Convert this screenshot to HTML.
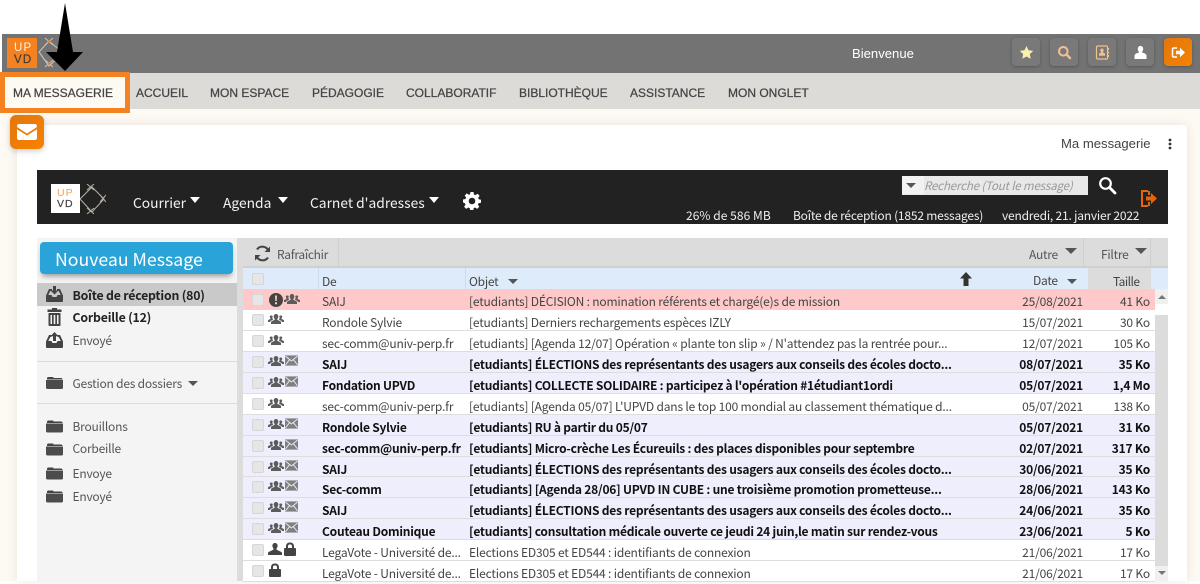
<!DOCTYPE html>
<html lang="fr"><head><meta charset="utf-8"><title>Ma messagerie</title>
<style>
*{box-sizing:border-box}
html,body{margin:0;padding:0}
body{width:1200px;height:581px;overflow:hidden;position:relative;background:#fff;font-family:"Noto Sans CJK JP","Liberation Sans",sans-serif;font-size:12px;letter-spacing:-.25px;color:#333}
.a{position:absolute;white-space:nowrap}
.nav{position:absolute;top:85px;font:12px/16px "Liberation Sans",sans-serif;color:#444;letter-spacing:0;-webkit-text-stroke:.25px #444;white-space:nowrap}
.tb{position:absolute;top:38px;width:28px;height:28px;border-radius:4px;background:#797979;box-shadow:0 1px 3px rgba(0,0,0,.25)}
.tb svg{position:absolute;left:7px;top:7px}
#rows{position:absolute;left:243px;top:289px;width:912px}
.r{position:relative;height:20.95px;border-bottom:1px solid #ddd;background:#fff;color:#444;line-height:20px;font-size:12px;letter-spacing:-.18px}
.r.u{background:#eeeefc;color:#111;font-weight:700;letter-spacing:-.22px}
.r.p{background:#ffc9c9;border-bottom:0}
.r span,.r svg,.r i{position:absolute;white-space:nowrap}
.r i{left:9px;top:4px;width:12px;height:12px;border-radius:2px;background:#e6e6e6;border:1px solid #d6d6d6}
.r.p i{top:5px}
.r .g{left:25px;top:3px}.r .e{left:42px;top:3px}
.f{left:79px;top:3px}.s{left:226px;top:3px}.d{right:72px;top:3px}.z{right:5px;top:3px}
.side{position:absolute;white-space:nowrap;line-height:16px;color:#555;font-size:12px;letter-spacing:-.22px}
.sb{font-size:12.3px;letter-spacing:-.2px;font-weight:700;color:#222}
.st{position:absolute;white-space:nowrap;top:208px;color:#eee;font-size:12px;line-height:16px;letter-spacing:-.2px}
.mn{position:absolute;white-space:nowrap;top:192px;color:#f2f2f2;font-size:13.8px;line-height:20px;letter-spacing:0}
.car{position:absolute;top:197px;width:0;height:0;border:5.5px solid transparent;border-top:6px solid #fff;border-bottom:0}
.h{position:absolute;white-space:nowrap;top:273px;line-height:17px;color:#444}
.t{position:absolute;white-space:nowrap;top:247px;line-height:16px;color:#555}
</style></head><body>
<svg width="0" height="0" style="position:absolute"><defs>
<symbol id="grp" viewBox="0 0 16 12"><path fill="#5c5c5c" d="M8 1c1.500 0 2.300 1.200 2.300 2.600 0 1-.5 1.900-1 2.400v.8l3 1.500c.5.3.7.6.7 1V11H3V9.300c0-.4.2-.7.7-1l3-1.500V6c-.5-.5-1-1.400-1-2.400C5.700 2.200 6.500 1 8 1zM3.300 2.500c.6 0 1.100.2 1.500.6-.3.5-.4 1-.4 1.500 0 .8.300 1.500.7 2.100L2.200 8.100V9H0V7.600c0-.3.100-.5.500-.7l2-1v-.6c-.4-.4-.7-1-.7-1.600 0-1 .6-1.200 1.500-1.200zm9.400 0c.9 0 1.500.2 1.500 1.200 0 .6-.3 1.200-.7 1.600v.6l2 1c.4.2.5.4.5.7V9h-2.200v-.9l-2.900-1.400c.4-.6.7-1.300.7-2.100 0-.5-.1-1-.4-1.500.4-.4.900-.6 1.500-.6z"/></symbol>
<symbol id="env" viewBox="0 0 14 11"><path fill="#808080" d="M0 0h14v11H0z"/><path fill="none" stroke="#eeeefc" stroke-width="1" d="M.5.800 7 6l6.500-5.200M.5 10.200 5 4.500M13.500 10.200 9 4.500"/></symbol>
<symbol id="lock" viewBox="0 0 12 14"><path fill="#444" d="M2 6V4.200C2 1.800 3.700.5 6 .5s4 1.300 4 3.700V6h1c.6 0 1 .4 1 1v6c0 .6-.4 1-1 1H1c-.6 0-1-.4-1-1V7c0-.6.4-1 1-1zm2 0h4V4.200C8 3 7.200 2.400 6 2.400S4 3 4 4.200z"/></symbol>
<symbol id="usr" viewBox="0 0 14 12"><path fill="#444" d="M7 0c1.700 0 2.600 1.300 2.600 2.900 0 1.100-.5 2.100-1.100 2.700v1l4.400 2.100c.7.300 1.100.8 1.100 1.400V12H0v-1.900c0-.6.400-1.100 1.100-1.400l4.400-2.100v-1C4.900 5 4.400 4 4.400 2.900 4.400 1.300 5.300 0 7 0z"/></symbol>
<symbol id="fold" viewBox="0 0 17 13"><path fill="#444" d="M1 2.500C1 1.500 1.500 1 2.500 1h3.800c.7 0 1 .3 1.400 1h7.300c1 0 1.500.5 1.500 1.500H1z"/><path fill="#4c4c4c" d="M0 4h17v7.500c0 1-.5 1.500-1.500 1.500h-14C.5 13 0 12.500 0 11.500z"/></symbol>
<symbol id="inb" viewBox="0 0 17 16"><path fill="#444" d="M3 3h3v2H4.300L2.300 9h3.200l1 2h4l1-2h3.200l-2-4H11V3h3l3 6.500V15c0 .6-.4 1-1 1H1c-.6 0-1-.4-1-1V9.500z"/><path fill="#444" d="M7 0h3v4.500h2.500l-4 4-4-4H7z"/></symbol>
<symbol id="snt" viewBox="0 0 17 16"><path fill="#444" d="M3 3h2.500v2H4.300L2.300 9h3.200l1 2h4l1-2h3.200l-2-4H11.500V3H14l3 6.500V15c0 .6-.4 1-1 1H1c-.6 0-1-.4-1-1V9.500z"/><path fill="#444" d="M8.500 0l4 4.200H10V9H7V4.200H4.500z"/></symbol>
</defs></svg>

<!-- top bar -->
<div class="a" style="left:2px;top:34px;width:1198px;height:39px;background:#737373"></div>
<div class="a" style="left:0;top:73px;width:1200px;height:36px;background:#dcdbd8"></div>
<div class="a" style="left:0;top:109px;width:1200px;height:472px;background:#fdf9f3"></div>

<div class="a" style="left:7px;top:38px;width:30px;height:30px;background:#f58220;color:#fdf1e3;font:11.5px/11px 'Liberation Sans',sans-serif;letter-spacing:1.2px;padding:5px 0 0 7px">UP<br><span style="color:#3d3d3d;-webkit-text-stroke:.2px #3d3d3d;position:relative;top:1px">VD</span></div>
<svg class="a" style="left:37px;top:37px" width="34" height="32" viewBox="0 0 34 32"><g fill="none" stroke="#c9c2b8" stroke-width="1.100"><path d="M2 15 12 4l14 12-14 13z"/><path d="M8 1l8 7M16 1 8 8M8 23l8 7M16 23l-8 7"/><path d="M22 11l8 8M30 11l-8 8"/></g><circle cx="12" cy="4.500" r="1.300" fill="#f58220"/><circle cx="12" cy="26.500" r="1.300" fill="#f58220"/></svg>

<div class="a" style="left:852px;top:45px;color:#fff;font:13.1px/17px 'Liberation Sans',sans-serif;letter-spacing:0">Bienvenue</div>

<div class="tb" style="left:1012px"><svg width="15" height="15" viewBox="0 0 15 15"><path fill="#fbefae" d="M7.500 1l2 4.300 4.700.6-3.400 3.200.9 4.700-4.200-2.300-4.200 2.300.9-4.700L.8 5.900l4.700-.6z"/></svg></div>
<div class="tb" style="left:1050px"><svg width="15" height="15" viewBox="0 0 15 15"><circle cx="6.300" cy="6.300" r="4.300" fill="none" stroke="#f2c08e" stroke-width="2"/><path d="M9.500 9.500l3.500 3.500" stroke="#f2c08e" stroke-width="2.400" stroke-linecap="round"/></svg></div>
<div class="tb" style="left:1088px"><svg width="15" height="15" viewBox="0 0 15 15"><rect x="1.500" y="1" width="11" height="13" rx="1" fill="none" stroke="#f2c08e" stroke-width="1.200"/><path fill="#f2c08e" d="M7 3.500c1.200 0 1.700.8 1.700 1.800 0 .6-.3 1.200-.7 1.500v.7l2 1v2.200H4V8.500l2-1v-.7c-.4-.3-.7-.9-.7-1.500C5.300 4.300 5.800 3.500 7 3.500zM13 3h1v2h-1zM13 6.500h1v2h-1zM13 10h1v2h-1z"/></svg></div>
<div class="tb" style="left:1126px"><svg width="15" height="15" viewBox="0 0 15 15"><path fill="#fff" d="M7.500 1C9.300 1 10.200 2.300 10.200 4c0 1.200-.5 2.200-1.100 2.800l-.1.700c2.500.7 4.500 1.600 4.500 3.300V14H1.500v-3.200c0-1.700 2-2.600 4.500-3.300l-.1-.7C5.300 6.200 4.800 5.200 4.800 4 4.800 2.300 5.700 1 7.500 1z"/></svg></div>
<div class="tb" style="left:1164px;background:linear-gradient(135deg,#e2770f,#f78200)"><svg width="15" height="15" viewBox="0 0 15 15"><path fill="none" stroke="#fff" stroke-width="1.500" d="M6 3H2.800C2 3 1.500 3.500 1.500 4.300v6.400c0 .8.500 1.300 1.300 1.300H6"/><path fill="#fff" d="M5 5.700h4V2.800l5 4.700-5 4.700V9.300H5z"/></svg></div>

<!-- nav -->
<div class="a" style="left:0;top:72px;width:130px;height:41px;background:#fdf9f3;border:5px solid #f58220"></div>
<div class="nav" style="left:13px">MA MESSAGERIE</div>
<div class="nav" style="left:136px">ACCUEIL</div>
<div class="nav" style="left:210px">MON ESPACE</div>
<div class="nav" style="left:312px">PÉDAGOGIE</div>
<div class="nav" style="left:406px">COLLABORATIF</div>
<div class="nav" style="left:519px">BIBLIOTHÈQUE</div>
<div class="nav" style="left:630px">ASSISTANCE</div>
<div class="nav" style="left:728px">MON ONGLET</div>

<!-- card -->
<div class="a" style="left:17px;top:125px;width:1170px;height:456px;background:#fff;border-radius:4px 4px 0 0;box-shadow:0 0 10px rgba(120,100,70,.14)"></div>

<!-- mail button -->
<div class="a" style="left:10px;top:115px;width:34px;height:34px;border-radius:6px;background:linear-gradient(135deg,#e2770f,#f78200);box-shadow:0 2px 6px rgba(0,0,0,.2)"><svg style="position:absolute;left:7px;top:9px" width="20" height="16" viewBox="0 0 20 16"><path fill="#fff" d="M2 0h16c1.100 0 2 .9 2 2 0 .7-.4 1.200-.9 1.600L10 9.500.9 3.600C.4 3.200 0 2.700 0 2c0-1.100.9-2 2-2zM0 5.200l10 6.300 10-6.300V14c0 1.100-.9 2-2 2H2c-1.100 0-2-.9-2-2z"/></svg></div>

<div class="a" style="left:1061px;top:135px;font:13.1px/17px 'Liberation Sans',sans-serif;letter-spacing:0;color:#444">Ma messagerie</div>
<svg class="a" style="left:1168px;top:138px" width="4" height="12"><circle cx="2" cy="2" r="1.400" fill="#333"/><circle cx="2" cy="6" r="1.400" fill="#333"/><circle cx="2" cy="10" r="1.400" fill="#333"/></svg>

<!-- dark header -->
<div class="a" style="left:37px;top:170px;width:1131px;height:54px;background:#222"></div>
<div class="a" style="left:51px;top:184px;width:29px;height:29px;background:#fff;color:#f5a04f;font:10.5px/11px 'Liberation Sans',sans-serif;letter-spacing:1px;padding:4px 0 0 6px">UP<br><span style="color:#444;-webkit-text-stroke:.2px #444">VD</span></div>
<svg class="a" style="left:80px;top:184px" width="26" height="30" viewBox="0 0 26 30"><g fill="none" stroke="#b8b0a6" stroke-width="1"><path d="M0 15 12 3l12 12-12 13z"/><path d="M7 0l7 6M14 0 7 6M7 24l7 6M14 24l-7 6M20 11l6 7M26 11l-6 7"/></g></svg>
<div class="mn" style="left:133px">Courrier</div>
<div class="car" style="left:190px"></div>
<div class="mn" style="left:223px">Agenda</div>
<div class="car" style="left:278px"></div>
<div class="mn" style="left:310px">Carnet d'adresses</div>
<div class="car" style="left:429px"></div>
<svg class="a" style="left:463px;top:192px" width="18" height="18" viewBox="0 0 18 18"><path fill="#fff" fill-rule="evenodd" d="M7.500 0h3l.5 2.500 1.400.6 2.100-1.400 2.100 2.100-1.400 2.100.6 1.400 2.200.5v3l-2.500.5-.6 1.400 1.400 2.100-2.100 2.100-2.100-1.400-1.400.6-.5 2.500h-3l-.5-2.500-1.400-.6-2.100 1.400-2.100-2.100 1.400-2.100-.6-1.400L0 10.500v-3l2.500-.5.6-1.400L1.700 3.500l2.100-2.100 2.100 1.400 1.100-.6zM9 5.700a3.300 3.300 0 1 0 0 6.600 3.300 3.300 0 0 0 0-6.600z"/></svg>

<div class="a" style="left:902px;top:176px;width:186px;height:19px;background:#e8e8e8"></div>
<div class="a" style="left:902px;top:176px;width:22px;height:18px;background:#f2f2f2"></div>
<div class="a" style="left:906px;top:183px;width:0;height:0;border:5px solid transparent;border-top:5px solid #555;border-bottom:0"></div>
<div class="a" style="left:924px;top:178px;color:#9a9a9a;font:italic 11.6px/16px 'Noto Sans CJK JP',sans-serif;letter-spacing:-.2px">Recherche (Tout le message)</div>
<svg class="a" style="left:1098px;top:176px" width="20" height="20" viewBox="0 0 20 20"><circle cx="7.500" cy="7.500" r="5.300" fill="none" stroke="#fff" stroke-width="2.200"/><path d="M11.500 11.500l5.500 5.500" stroke="#fff" stroke-width="2.800" stroke-linecap="round"/></svg>
<svg class="a" style="left:1140px;top:189px" width="18" height="20" viewBox="0 0 18 20"><path fill="none" stroke="#e8640b" stroke-width="2" d="M8 2H2v15h6"/><path fill="#e8640b" d="M8 2h2v4H8zM8 13h2v4H8zM6 7.500h5V4l6 5.500-6 5.500v-3.500H6z"/></svg>
<div class="st" style="left:686px;letter-spacing:.05px">26% de 586 MB</div>
<div class="st" style="left:793px">Boîte de réception (1852 messages)</div>
<div class="st" style="left:1002px">vendredi, 21. janvier 2022</div>

<!-- sidebar -->
<div class="a" style="left:37px;top:238px;width:200px;height:343px;background:#f4f4f4"></div>
<div class="a" style="left:237px;top:238px;width:6px;height:343px;background:#dcdcdc"></div>
<div class="a" style="left:40px;top:242px;width:193px;height:32px;border-radius:4px;background:#2aa4d8;color:#fff;font-size:17.7px;letter-spacing:0;line-height:34px;padding-left:15px;box-shadow:0 4px 6px -2px rgba(0,0,0,.4)">Nouveau Message</div>
<div class="a" style="left:37px;top:283px;width:200px;height:23px;background:#c9c9c9"></div>
<svg class="a" style="left:46px;top:286px" width="17" height="16"><use href="#inb"/></svg>
<div class="side sb" style="left:72.500px;top:287px">Boîte de réception (80)</div>
<svg class="a" style="left:47px;top:308px" width="15" height="18" viewBox="0 0 15 18"><path fill="#444" d="M5 0h5v1.500h4.500V4H.5V1.500H5zM1.500 5h12v12c0 .6-.4 1-1 1h-10c-.6 0-1-.4-1-1zm2 2v9h1.500V7zm3.200 0v9h1.600V7zm3.300 0v9h1.500V7z"/></svg>
<div class="side sb" style="left:72.500px;top:309px">Corbeille (12)</div>
<svg class="a" style="left:46px;top:332px" width="17" height="16"><use href="#snt"/></svg>
<div class="side" style="left:72.500px;top:333px">Envoyé</div>
<div class="a" style="left:37px;top:361px;width:200px;height:1px;background:#ddd"></div>
<svg class="a" style="left:46px;top:376px" width="17" height="13"><use href="#fold"/></svg>
<div class="side" style="left:72.500px;top:376px">Gestion des dossiers</div>
<div class="a" style="left:188px;top:381px;width:0;height:0;border:5px solid transparent;border-top:5.5px solid #555;border-bottom:0"></div>
<div class="a" style="left:37px;top:403px;width:200px;height:1px;background:#ddd"></div>
<svg class="a" style="left:46px;top:419px" width="17" height="14"><use href="#fold"/></svg>
<div class="side" style="left:72.500px;top:419px">Brouillons</div>
<svg class="a" style="left:46px;top:442px" width="17" height="14"><use href="#fold"/></svg>
<div class="side" style="left:72.500px;top:441px">Corbeille</div>
<svg class="a" style="left:46px;top:466px" width="17" height="14"><use href="#fold"/></svg>
<div class="side" style="left:72.500px;top:466px">Envoye</div>
<svg class="a" style="left:46px;top:489px" width="17" height="14"><use href="#fold"/></svg>
<div class="side" style="left:72.500px;top:489px">Envoyé</div>

<!-- toolbar -->
<div class="a" style="left:243px;top:238px;width:925px;height:30px;background:#dcdcdc;border-bottom:2px solid #cfcfcf"></div>
<div class="a" style="left:338px;top:238px;width:1px;height:29px;background:#cfcfcf"></div>
<div class="a" style="left:1083px;top:238px;width:1px;height:29px;background:#cfcfcf"></div>
<div class="a" style="left:1150px;top:238px;width:1px;height:29px;background:#cfcfcf"></div>
<svg class="a" style="left:254px;top:245px" width="17" height="17" viewBox="0 0 17 17"><path fill="none" stroke="#444" stroke-width="2" d="M14.500 6A6.500 6.500 0 0 0 3 4.500M2.500 11A6.500 6.500 0 0 0 14 12.500"/><path fill="#444" d="M16 1.500V7h-5.500zM1 15.500V10h5.500z"/></svg>
<div class="t" style="left:277px;letter-spacing:-.3px">Rafraîchir</div>
<div class="t" style="left:1029px">Autre</div>
<div class="a" style="left:1065px;top:248px;width:0;height:0;border:6px solid transparent;border-top:6px solid #555;border-bottom:0"></div>
<div class="t" style="left:1101px">Filtre</div>
<div class="a" style="left:1135px;top:248px;width:0;height:0;border:6px solid transparent;border-top:6px solid #555;border-bottom:0"></div>

<!-- head row -->
<div class="a" style="left:243px;top:268px;width:925px;height:21px;background:#deebfb"></div>
<div class="a" style="left:1088px;top:268px;width:63px;height:21px;background:#dcdcdc"></div>
<div class="a" style="left:318px;top:268px;width:1px;height:21px;background:#cfdbe8"></div>
<div class="a" style="left:465px;top:268px;width:1px;height:21px;background:#cfdbe8"></div>
<i class="a" style="left:252px;top:273px;width:12px;height:12px;border-radius:2px;background:#e6e6e6;border:1px solid #d6d6d6"></i>
<div class="h" style="left:322px">De</div>
<div class="h" style="left:469px">Objet</div>
<div class="a" style="left:508px;top:279px;width:0;height:0;border:5px solid transparent;border-top:5px solid #555;border-bottom:0"></div>
<svg class="a" style="left:960px;top:272px" width="12" height="14" viewBox="0 0 12 14"><path fill="#333" d="M6 0l6 6.500H8.500V14h-5V6.500H0z"/></svg>
<div class="h" style="left:1033px;top:272px">Date</div>
<div class="a" style="left:1067px;top:279px;width:0;height:0;border:5px solid transparent;border-top:5px solid #555;border-bottom:0"></div>
<div class="h" style="left:1113px;letter-spacing:-.55px">Taille</div>

<!-- rows -->
<div id="rows">
<div class="r p"><i></i><svg style="left:26px;top:4px" width="14" height="14" viewBox="0 0 14 14"><circle cx="7" cy="7" r="7" fill="#444"/><path fill="#ffc9c9" d="M6 2.500h2l-.3 5.500H6.300zM6 9.300h2v2H6z"/></svg><svg style="left:41px;top:4px" width="16" height="12"><use href="#grp"/></svg><span class="f">SAIJ</span><span class="s">[etudiants] DÉCISION : nomination référents et chargé(e)s de mission</span><span class="d">25/08/2021</span><span class="z">41 Ko</span></div>
<div class="r"><i></i><svg class="g" width="16" height="12"><use href="#grp"/></svg><span class="f">Rondole Sylvie</span><span class="s">[etudiants] Derniers rechargements espèces IZLY</span><span class="d">15/07/2021</span><span class="z">30 Ko</span></div>
<div class="r"><i></i><svg class="g" width="16" height="12"><use href="#grp"/></svg><span class="f">sec-comm@univ-perp.fr</span><span class="s">[etudiants] [Agenda 12/07] Opération « plante ton slip » / N'attendez pas la rentrée pour...</span><span class="d">12/07/2021</span><span class="z">105 Ko</span></div>
<div class="r u"><i></i><svg class="g" width="16" height="12"><use href="#grp"/></svg><svg class="e" width="13" height="11"><use href="#env"/></svg><span class="f">SAIJ</span><span class="s">[etudiants] ÉLECTIONS des représentants des usagers aux conseils des écoles docto...</span><span class="d">08/07/2021</span><span class="z">35 Ko</span></div>
<div class="r u"><i></i><svg class="g" width="16" height="12"><use href="#grp"/></svg><svg class="e" width="13" height="11"><use href="#env"/></svg><span class="f">Fondation UPVD</span><span class="s">[etudiants] COLLECTE SOLIDAIRE : participez à l'opération #1étudiant1ordi</span><span class="d">05/07/2021</span><span class="z">1,4 Mo</span></div>
<div class="r"><i></i><svg class="g" width="16" height="12"><use href="#grp"/></svg><span class="f">sec-comm@univ-perp.fr</span><span class="s">[etudiants] [Agenda 05/07] L'UPVD dans le top 100 mondial au classement thématique d...</span><span class="d">05/07/2021</span><span class="z">138 Ko</span></div>
<div class="r u"><i></i><svg class="g" width="16" height="12"><use href="#grp"/></svg><svg class="e" width="13" height="11"><use href="#env"/></svg><span class="f">Rondole Sylvie</span><span class="s">[etudiants] RU à partir du 05/07</span><span class="d">05/07/2021</span><span class="z">31 Ko</span></div>
<div class="r u"><i></i><svg class="g" width="16" height="12"><use href="#grp"/></svg><svg class="e" width="13" height="11"><use href="#env"/></svg><span class="f">sec-comm@univ-perp.fr</span><span class="s">[etudiants] Micro-crèche Les Écureuils : des places disponibles pour septembre</span><span class="d">02/07/2021</span><span class="z">317 Ko</span></div>
<div class="r u"><i></i><svg class="g" width="16" height="12"><use href="#grp"/></svg><svg class="e" width="13" height="11"><use href="#env"/></svg><span class="f">SAIJ</span><span class="s">[etudiants] ÉLECTIONS des représentants des usagers aux conseils des écoles docto...</span><span class="d">30/06/2021</span><span class="z">35 Ko</span></div>
<div class="r u"><i></i><svg class="g" width="16" height="12"><use href="#grp"/></svg><svg class="e" width="13" height="11"><use href="#env"/></svg><span class="f">Sec-comm</span><span class="s">[etudiants] [Agenda 28/06] UPVD IN CUBE : une troisième promotion prometteuse...</span><span class="d">28/06/2021</span><span class="z">143 Ko</span></div>
<div class="r u"><i></i><svg class="g" width="16" height="12"><use href="#grp"/></svg><svg class="e" width="13" height="11"><use href="#env"/></svg><span class="f">SAIJ</span><span class="s">[etudiants] ÉLECTIONS des représentants des usagers aux conseils des écoles docto...</span><span class="d">24/06/2021</span><span class="z">35 Ko</span></div>
<div class="r u"><i></i><svg class="g" width="16" height="12"><use href="#grp"/></svg><svg class="e" width="13" height="11"><use href="#env"/></svg><span class="f">Couteau Dominique</span><span class="s">[etudiants] consultation médicale ouverte ce jeudi 24 juin,le matin sur rendez-vous</span><span class="d">23/06/2021</span><span class="z">5 Ko</span></div>
<div class="r"><i></i><svg style="left:25px;top:3px" width="14" height="12"><use href="#usr"/></svg><svg style="left:41px;top:2px" width="12" height="14"><use href="#lock"/></svg><span class="f">LegaVote - Université de...</span><span class="s">Elections ED305 et ED544 : identifiants de connexion</span><span class="d">21/06/2021</span><span class="z">17 Ko</span></div>
<div class="r"><i></i><svg style="left:26px;top:2px" width="12" height="14"><use href="#lock"/></svg><span class="f">LegaVote - Université de...</span><span class="s">Elections ED305 et ED544 : identifiants de connexion</span><span class="d">21/06/2021</span><span class="z">17 Ko</span></div>
</div>

<!-- scrollbar -->
<div class="a" style="left:1155px;top:289px;width:13px;height:292px;background:#dcdcdc"></div>
<div class="a" style="left:1155px;top:289px;width:13px;height:26px;background:#fff"></div>
<div class="a" style="left:1155px;top:289px;width:13px;height:15px;background:#f0f0f0"></div>
<div class="a" style="left:1158px;top:295px;width:0;height:0;border:4px solid transparent;border-bottom:4px solid #777;border-top:0"></div>
<div class="a" style="left:1155px;top:566px;width:13px;height:15px;background:#f0f0f0"></div>
<div class="a" style="left:1158px;top:571px;width:0;height:0;border:4px solid transparent;border-top:4px solid #777;border-bottom:0"></div>

<!-- black arrow -->
<svg class="a" style="left:44px;top:0;z-index:5" width="42" height="73" viewBox="0 0 42 73"><path fill="#000" d="M21 3 29 52H39L21 71 2 52H13z"/></svg>
</body></html>
